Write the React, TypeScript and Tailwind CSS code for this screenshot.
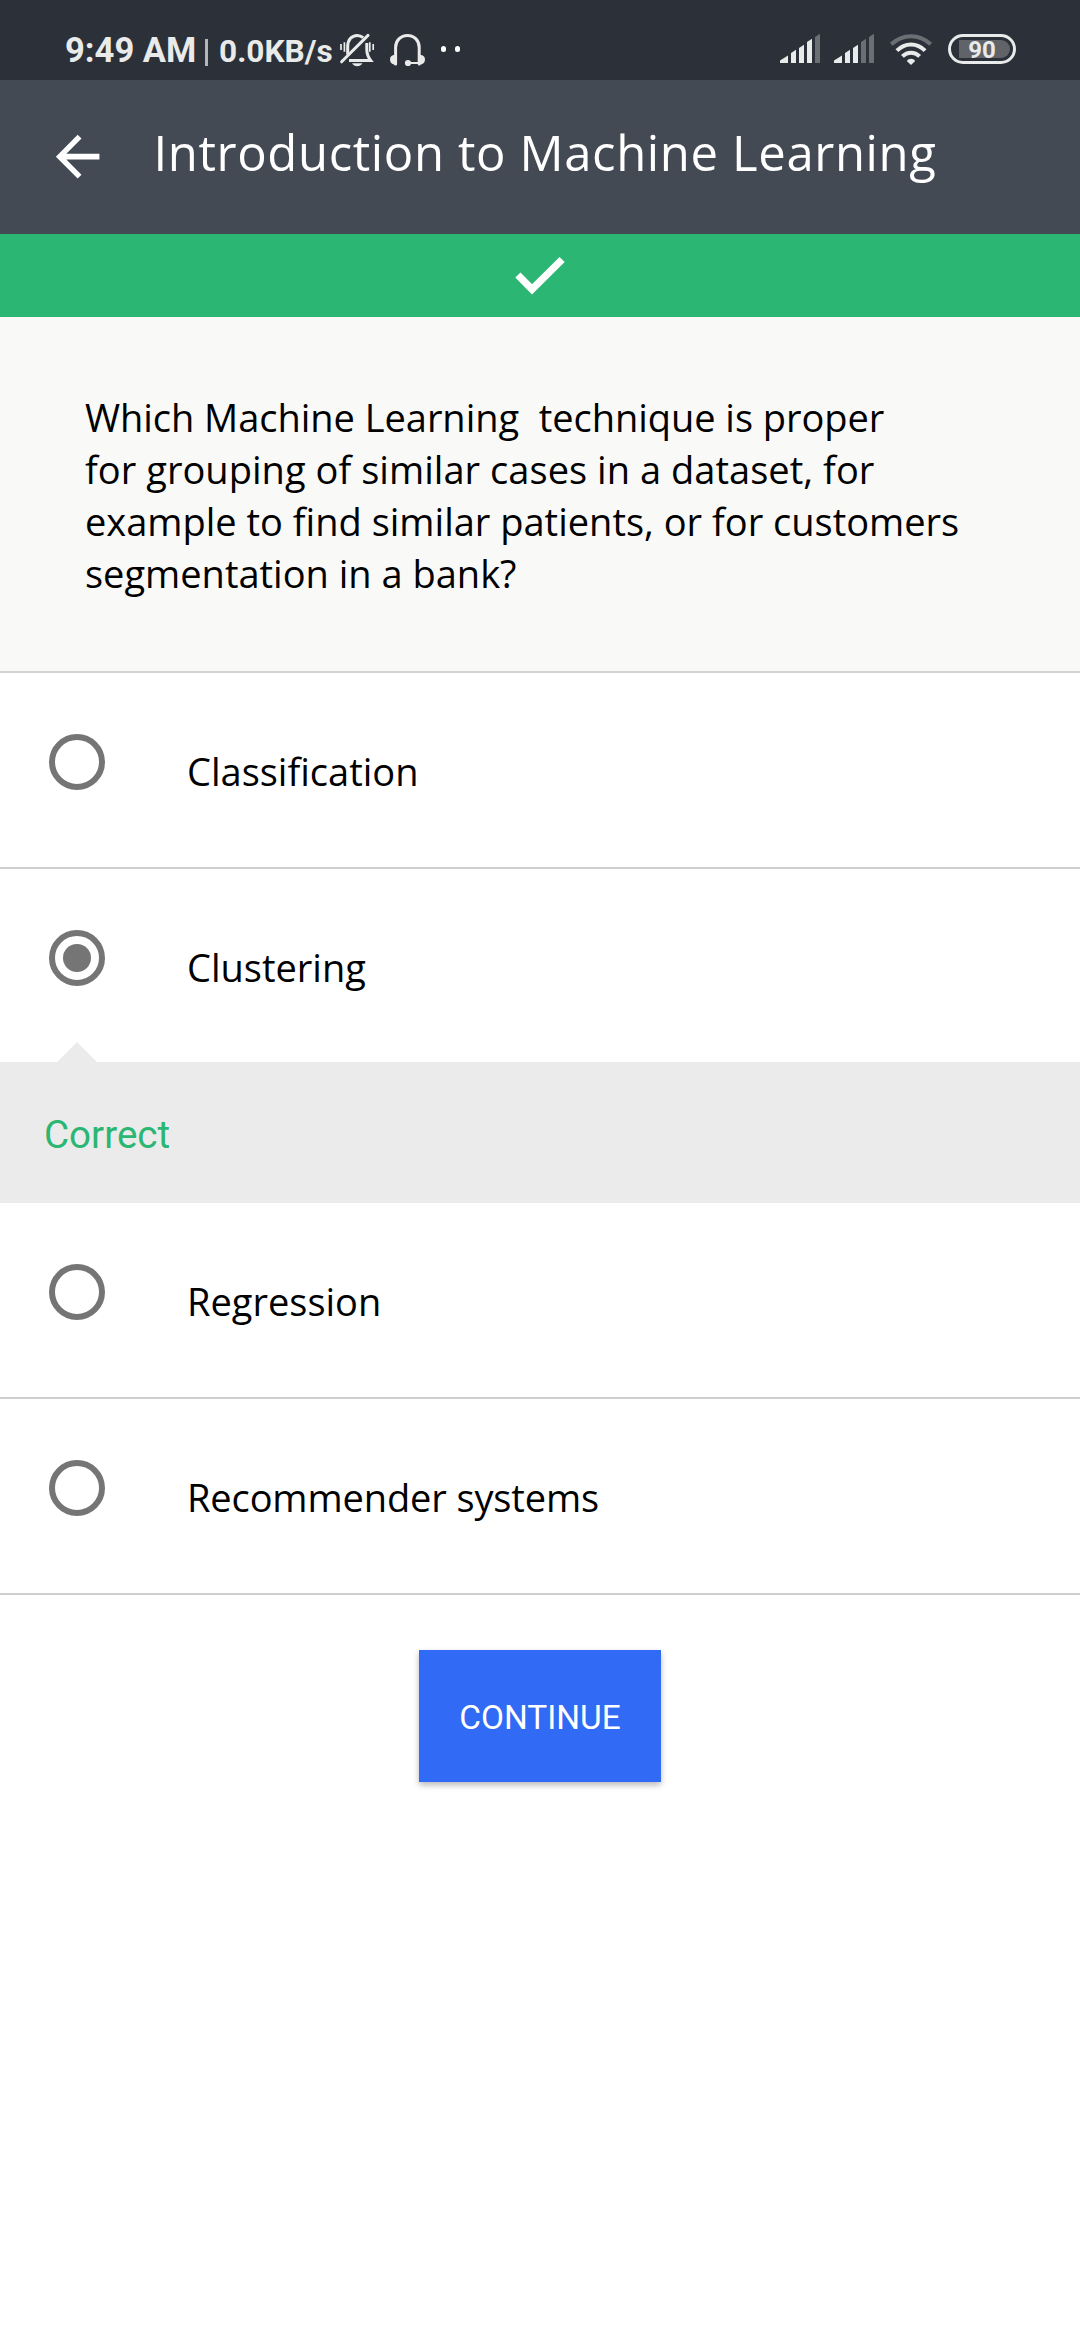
import { Fragment } from "react";

function BellOffIcon() {
  return (
    <svg className="h-9 w-9.5 shrink-0" viewBox="338 32 38 36" fill="none" stroke="#e9eaea" strokeWidth="2.6">
      <path d="M347.7 54.5V46.5C347.7 40 351.5 35.4 357.2 35.4C359.6 35.4 361.6 36.2 363.2 37.6" strokeWidth="3" />
      <path d="M366.8 43V49.5C366.8 54 368.2 57.2 370.8 60.6H349" strokeWidth="3" />
      <path d="M341.6 61.8L368 35.4" strokeWidth="3" strokeLinecap="round" />
      <path d="M352 63.2H362.5C361.3 65.3 359.4 66.2 357.2 66.2C355 66.2 353.2 65.3 352 63.2Z" fill="#e9eaea" stroke="none" />
      <path d="M341 44V50M344.4 42.2V51.8M369.8 42.2V51.8M373.2 44V50" strokeWidth="1.7" />
    </svg>
  );
}

function HeadsetIcon() {
  return (
    <svg className="h-9 w-9.5 shrink-0" viewBox="389 32 38 36" fill="#e9eaea">
      <path d="M395.6 64V47.5C395.6 40.6 400.6 35.5 407.5 35.5C414.4 35.5 419.2 40.6 419.2 47.5V64" fill="none" stroke="#e9eaea" strokeWidth="3" strokeLinecap="round" />
      <path d="M397 55H393.8C391.4 55.4 390 57 390 59.6C390 62.2 391.4 64 393.8 64.4L397 64.8ZM418 55H421.2C423.6 55.4 425 57 425 59.6C425 62.2 423.6 64 421.2 64.4L418 64.8Z" />
      <circle cx="408" cy="63" r="3.1" />
      <path d="M408 62H420V64H408Z" />
    </svg>
  );
}

const bars = [
  "M780 63V60.5L788 55.4V63Z",
  "M791 63V53L796 49.8V63Z",
  "M799 63V48L804 44.8V63Z",
  "M807 63V42L812 38.8V63Z",
  "M815 63V37L820 33.8V63Z",
];

function SignalIcon({ level }: { level: number }) {
  return (
    <svg className="h-9 w-10 shrink-0" viewBox="780 32 40 36">
      {bars.map((d, i) => (
        <path key={d} d={d} fill={i < level ? "#e9eaea" : "#6b6e73"} />
      ))}
    </svg>
  );
}

function WifiIcon() {
  return (
    <svg className="h-9 w-11 shrink-0" viewBox="889 32 44 36" fill="none" stroke="#e9eaea" strokeWidth="4">
      <path d="M891.3 44.3C902.5 33.5 919.5 33.5 930.7 44.3" stroke="#6b6e73" />
      <path d="M896.9 50.7C905 42.4 917 42.4 925.1 50.7" />
      <path d="M902.4 56.4C907.3 51.4 914.7 51.4 919.6 56.4" />
      <path d="M907 61.2C907 57.8 915 57.8 915 61.2L911 65Z" fill="#e9eaea" stroke="none" />
    </svg>
  );
}

function Battery() {
  return (
    <div className="relative flex h-[30px] w-[68px] items-center justify-center rounded-full border-3 border-[#e9eaea] pt-0.5">
      <div className="absolute top-[3px] left-2 h-[18px] w-[51px] rounded-l-xs rounded-r-full bg-[#606368]" />
      <span className="relative text-2xl leading-6 font-bold">90</span>
    </div>
  );
}

function StatusBar() {
  return (
    <div className="flex h-20 items-start bg-[#2c3038] pl-[65px] font-['Roboto',sans-serif] font-bold text-[#e9eaea]">
      <span className="mt-[30px] w-[140px] text-[34.6px] leading-[41px] whitespace-nowrap">9:49 AM</span>
      <span className="mt-[39px] h-[27px] w-[3px] bg-[#b4b6b9]" />
      <span className="mt-[33px] ml-[11px] w-[119px] text-[31.6px] leading-[37px] whitespace-nowrap">0.0KB/s</span>
      <div className="mt-8 flex gap-[13px]">
        <BellOffIcon />
        <HeadsetIcon />
      </div>
      <div className="mt-[46px] ml-[14px] flex gap-[9px]">
        <span className="h-1.5 w-[5px] rounded-full bg-white" />
        <span className="h-1.5 w-[5px] rounded-full bg-white" />
      </div>
      <div className="mt-8 mr-16 ml-auto flex">
        <SignalIcon level={4} />
        <div className="ml-3.5 flex">
          <SignalIcon level={3} />
        </div>
        <div className="ml-[15px] flex">
          <WifiIcon />
        </div>
        <div className="mt-0.5 ml-[15px]">
          <Battery />
        </div>
      </div>
    </div>
  );
}

function Header() {
  return (
    <header className="flex h-[154px] items-start bg-[#444a53] pl-[45px] text-white">
      <svg className="mt-11 h-[65.3px] w-[65.3px] shrink-0" viewBox="0 0 24 24" fill="currentColor">
        <path d="M20 10.95H7.83l5.59-5.59L12 3.95l-8 8.05 8 8.05 1.41-1.41L7.83 13.05H20z" />
      </svg>
      <h1 className="mt-[38px] ml-[43.2px] text-[49px] leading-[68px] tracking-[0.63px] whitespace-nowrap">Introduction to Machine Learning</h1>
    </header>
  );
}

function Radio({ checked }: { checked?: boolean }) {
  return (
    <span className="flex size-14 shrink-0 items-center justify-center rounded-full border-6 border-[#757575]">
      {checked && <span className="size-7 rounded-full bg-[#757575]" />}
    </span>
  );
}

const options = [
  { label: "Classification" },
  { label: "Clustering", checked: true },
  { label: "Regression" },
  { label: "Recommender systems", tight: true },
];

export default function App() {
  return (
    <div className="flex min-h-[2340px] w-[1080px] flex-col overflow-hidden bg-white font-['Open_Sans',sans-serif] text-black">
      <StatusBar />
      <Header />
      <div className="flex h-[83px] justify-center bg-[#2bb673] pt-[22px]">
        <svg className="h-10 w-[50px]" viewBox="514.5 256 50 40">
          <path d="M517.4 275L531.5 289.4L561.6 259.5" fill="none" stroke="white" strokeWidth="7.3" />
        </svg>
      </div>
      <section className="h-[356px] border-b-2 border-[#d3d3d3] bg-[#f9f9f7] pt-[74px] pl-[85px]">
        <p className="text-[38px] leading-[52px] whitespace-pre">
          <span className="block tracking-[-0.04px]">{"Which Machine Learning  technique is proper"}</span>
          <span className="block tracking-[0.04px]">for grouping of similar cases in a dataset, for</span>
          <span className="block">example to find similar patients, or for customers</span>
          <span className="block">segmentation in a bank?</span>
        </p>
      </section>
      {options.map((o) => (
        <Fragment key={o.label}>
          <div className={o.checked ? "flex h-[193px] pl-[49px]" : "flex h-[196px] border-b-2 border-[#cecece] pl-[49px]"}>
            <div className="pt-[61px]">
              <Radio checked={o.checked} />
            </div>
            <span className={o.tight ? "pt-[72px] pl-[82px] text-[38px] leading-[52px] tracking-[-0.12px]" : "pt-[72px] pl-[82px] text-[38px] leading-[52px]"}>
              {o.label}
            </span>
          </div>
          {o.checked && (
            <div className="relative h-[141px] bg-[#ebebeb] pt-[50px] pl-11">
              <svg className="absolute -top-5 left-14 h-5 w-[42px]" viewBox="0 0 42 20">
                <path d="M1 20L21 0L41 20Z" fill="#ebebeb" />
              </svg>
              <p className="font-['Roboto',sans-serif] text-[38.6px] leading-[46px] text-[#2bb673]">Correct</p>
            </div>
          )}
        </Fragment>
      ))}
      <button className="mt-[55px] flex h-[132px] w-[242px] items-center justify-center self-center bg-[#316af4] pt-1 font-['Roboto',sans-serif] text-[33.4px] text-white shadow-[0_3px_6px_rgba(0,0,0,0.28)]">
        CONTINUE
      </button>
    </div>
  );
}
